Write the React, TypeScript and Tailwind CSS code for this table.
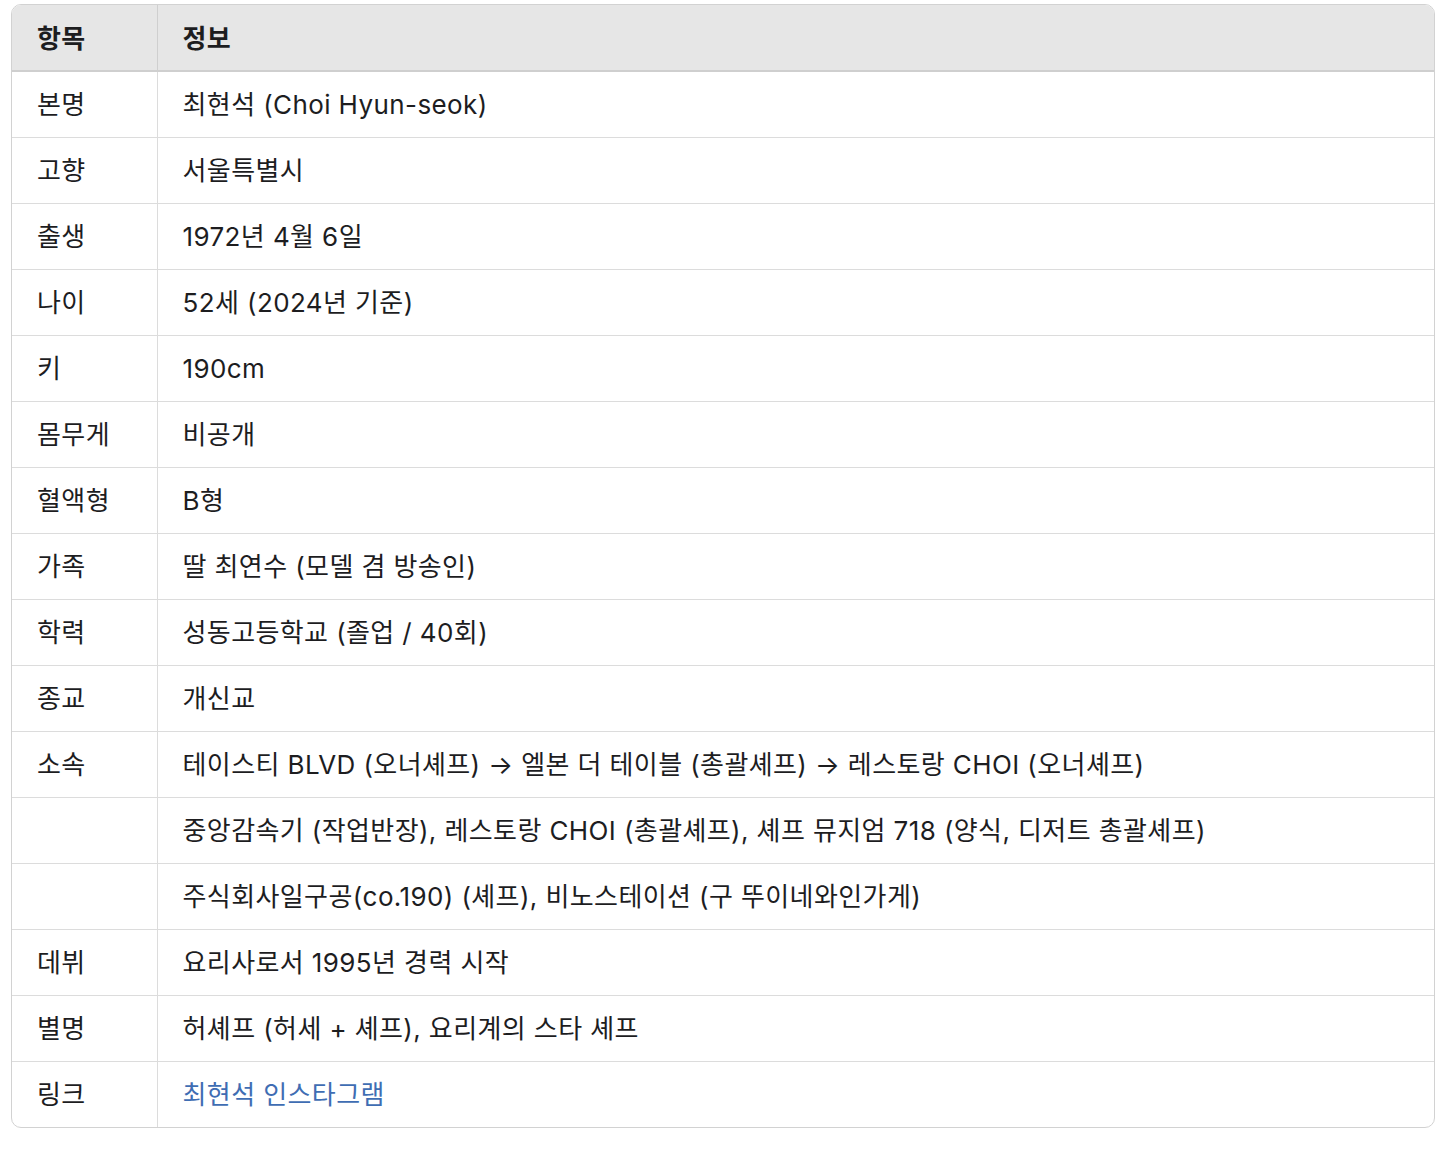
import React from "react";

const rows: [string, React.ReactNode][] = [
  ["본명", "최현석 (Choi Hyun-seok)"],
  ["고향", "서울특별시"],
  ["출생", "1972년 4월 6일"],
  ["나이", "52세 (2024년 기준)"],
  ["키", "190cm"],
  ["몸무게", "비공개"],
  ["혈액형", "B형"],
  ["가족", "딸 최연수 (모델 겸 방송인)"],
  ["학력", "성동고등학교 (졸업 / 40회)"],
  ["종교", "개신교"],
  ["소속", "테이스티 BLVD (오너셰프) → 엘본 더 테이블 (총괄셰프) → 레스토랑 CHOI (오너셰프)"],
  ["", "중앙감속기 (작업반장), 레스토랑 CHOI (총괄셰프), 셰프 뮤지엄 718 (양식, 디저트 총괄셰프)"],
  ["", "주식회사일구공(co.190) (셰프), 비노스테이션 (구 뚜이네와인가게)"],
  ["데뷔", "요리사로서 1995년 경력 시작"],
  ["별명", "허셰프 (허세 + 셰프), 요리계의 스타 셰프"],
  ["링크", <a className="text-[#3f6db3]" href="#">최현석 인스타그램</a>],
];

export default function App() {
  return (
    <div
      className="bg-white min-h-[1150px] pl-[11px] pr-[11px] pt-[4px] text-[#1d1d1f]"
      style={{ fontFamily: '"Inter", "Noto Sans CJK KR", sans-serif' }}
    >
      <div className="w-[1424px] border border-[#d2d2d2] rounded-[10px] overflow-hidden">
        <table className="w-full border-collapse text-[26px] tracking-[0.4px] leading-none">
          <thead>
            <tr className="bg-[#e6e6e6]">
              <th className="w-[145px] h-[66px] text-left font-semibold pl-[25px] pt-[2px] border-r border-b-2 border-[#cfcfcf]">항목</th>
              <th className="h-[66px] text-left font-semibold pl-[25px] pt-[2px] border-b-2 border-[#cfcfcf]">정보</th>
            </tr>
          </thead>
          <tbody>
            {rows.map(([k, v], i) => (
              <tr key={i}>
                <td className={`w-[145px] h-[66px] pl-[25px] pt-[2px] border-r border-[#dcdcdc] ${i < rows.length - 1 ? "border-b" : ""}`}>{k}</td>
                <td className={`h-[66px] pl-[25px] pt-[2px] border-[#dcdcdc] ${i < rows.length - 1 ? "border-b" : ""}`}>{v}</td>
              </tr>
            ))}
          </tbody>
        </table>
      </div>
    </div>
  );
}
